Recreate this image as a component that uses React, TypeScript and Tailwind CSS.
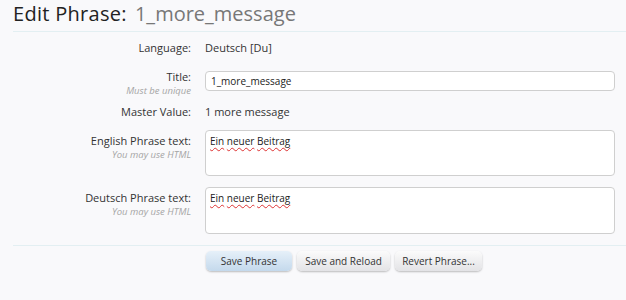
import React from 'react';

const pageFont = { fontFamily: '"Open Sans", "DejaVu Sans", sans-serif' };

function Label({ text, hint }: { text: string; hint?: string }) {
  return (
    <div className="text-right">
      <div className="text-[11px] leading-[14px] text-[#333]">{text}</div>
      {hint && <div className="mt-[1px] text-[9.5px] leading-[12px] italic text-[#a5a5a5]">{hint}</div>}
    </div>
  );
}

// red squiggle under words the spellchecker doesn't know
function Squiggly({ words }: { words: string[] }) {
  return (
    <>
      {words.map((w, i) => (
        <span key={i}>
          <span className="underline decoration-wavy decoration-[#d33] decoration-1 underline-offset-2">{w}</span>
          {i < words.length - 1 ? ' ' : ''}
        </span>
      ))}
    </>
  );
}

export default function App() {
  return (
    <div className="h-[300px] w-[626px] overflow-hidden bg-[#f9f9fb] text-[#333]" style={pageFont}>
      <h1 className="mx-[13px] flex h-[31px] items-end pb-[5px] text-[20px] leading-[24px] text-[#222]">
        <span className="tracking-[0.3px]">Edit Phrase:</span>
        <span className="ml-[8px] text-[#777]">1_more_message</span>
      </h1>
      <div className="ml-[13px] h-px bg-[#e3eff2]" />

      <div className="ml-[13px] mr-[11px] grid grid-cols-[178px_1fr] gap-x-[14px]">
        {/* Language */}
        <div className="mt-[9px]">
          <Label text="Language:" />
        </div>
        <div className="mt-[9px] text-[11px] leading-[14px]">Deutsch [Du]</div>

        {/* Title */}
        <div className="mt-[15px]">
          <Label text="Title:" hint="Must be unique" />
        </div>
        <div className="mt-[12px]">
          <input
            readOnly
            value="1_more_message"
            className="h-[20px] w-full rounded-[4px] border border-[#cfcfcf] bg-white px-[5px] text-[10px] text-[#222] outline-none"
          />
        </div>

        {/* Master Value */}
        <div className="mt-[8px]">
          <Label text="Master Value:" />
        </div>
        <div className="mt-[8px] text-[11px] leading-[14px]">1 more message</div>

        {/* English */}
        <div className="mt-[15px]">
          <Label text="English Phrase text:" hint="You may use HTML" />
        </div>
        <div className="mt-[11px]">
          <div className="h-[46px] w-full rounded-[4px] border border-[#cfcfcf] bg-white px-[4px] py-[3px] text-[10px] leading-[14px] text-[#222]">
            <Squiggly words={['Ein', 'neuer', 'Beitrag']} />
          </div>
        </div>

        {/* Deutsch */}
        <div className="mt-[15px]">
          <Label text="Deutsch Phrase text:" hint="You may use HTML" />
        </div>
        <div className="mt-[11px]">
          <div className="h-[47px] w-full rounded-[4px] border border-[#cfcfcf] bg-white px-[4px] py-[3px] text-[10px] leading-[14px] text-[#222]">
            <Squiggly words={['Ein', 'neuer', 'Beitrag']} />
          </div>
        </div>
      </div>

      <div className="ml-[13px] mt-[11px] h-px bg-[#e3eff2]" />

      <div className="ml-[206px] mt-[5px] flex gap-[5px]">
        <button className="h-[20px] w-[86px] rounded-[5px] bg-gradient-to-b from-[#e6f0f9] to-[#c4d9ec] text-[10px] text-[#333] shadow-[0_1px_2px_rgba(0,0,0,0.25)]">
          Save Phrase
        </button>
        <button className="h-[20px] w-[93px] rounded-[5px] bg-gradient-to-b from-[#fbfbfb] to-[#e3e3e6] text-[10px] text-[#333] shadow-[0_1px_2px_rgba(0,0,0,0.25)]">
          Save and Reload
        </button>
        <button className="h-[20px] w-[87px] rounded-[5px] bg-gradient-to-b from-[#fbfbfb] to-[#e3e3e6] text-[10px] text-[#333] shadow-[0_1px_2px_rgba(0,0,0,0.25)]">
          Revert Phrase...
        </button>
      </div>
    </div>
  );
}
